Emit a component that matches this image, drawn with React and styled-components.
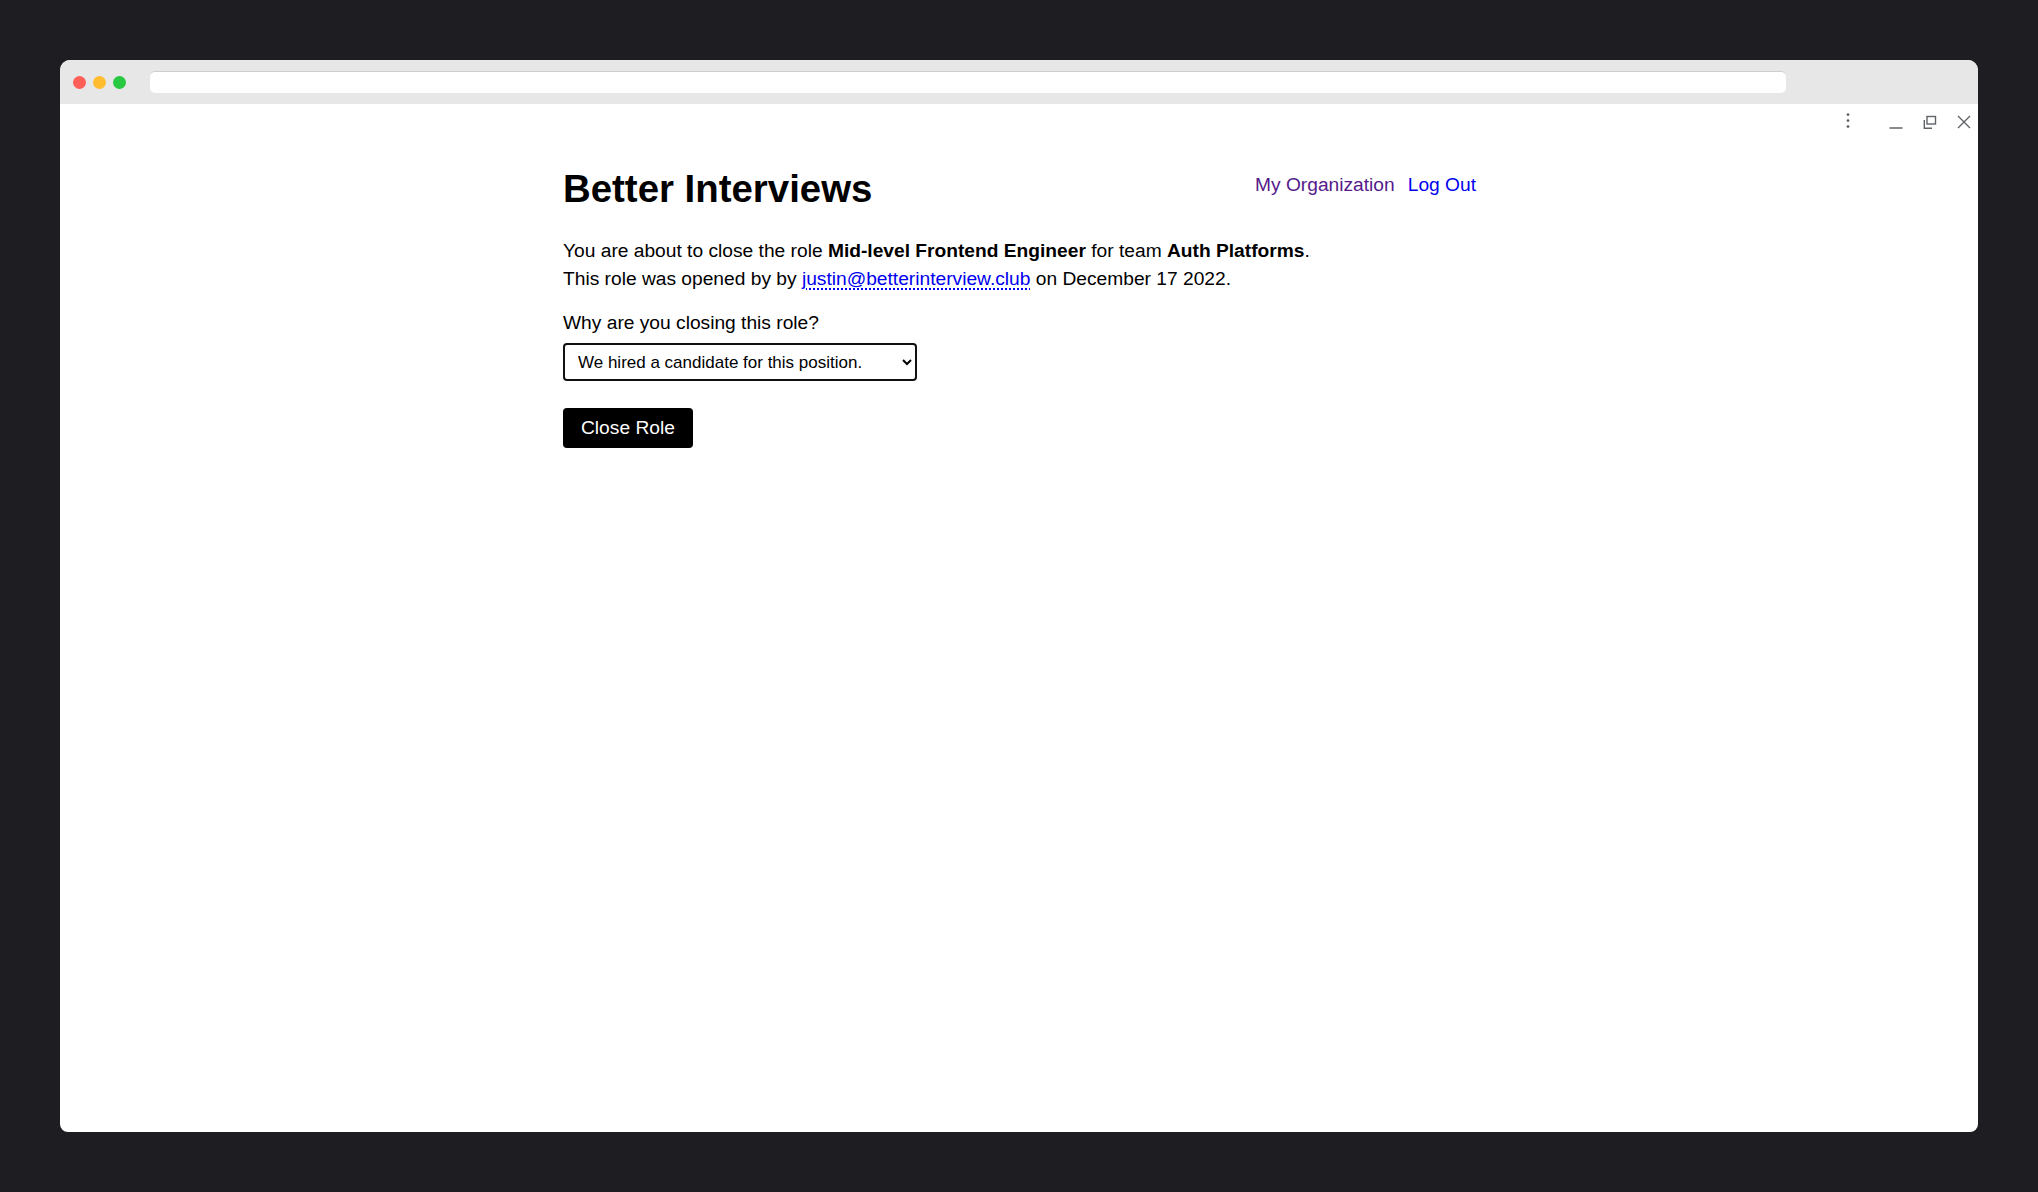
import React from "react";
import styled, { createGlobalStyle } from "styled-components";

const Global = createGlobalStyle`
  html, body {
    margin: 0;
    padding: 0;
    background: #1e1e22;
  }
  body {
    font-family: "Liberation Sans", Arial, sans-serif;
  }
`;

const Stage = styled.div`
  padding: 60px;
  height: 1192px;
  box-sizing: border-box;
`;

const Frame = styled.div`
  height: 1072px;
  background: #fff;
  border-radius: 10px 10px 8px 8px;
  overflow: hidden;
  display: flex;
  flex-direction: column;
`;

const TitleBar = styled.div`
  height: 44px;
  flex: none;
  background: #e7e7e7;
  display: flex;
  align-items: center;
  padding-left: 13px;
  box-sizing: border-box;
`;

const Lights = styled.div`
  display: flex;
  gap: 7px;
  margin-right: 24px;
`;

const Light = styled.span`
  width: 13px;
  height: 13px;
  border-radius: 50%;
  background: ${props => props.color};
`;

const UrlBar = styled.div`
  flex: 1;
  height: 22px;
  margin-right: 192px;
  background: #fff;
  border-radius: 5px;
  border-top: 1px solid #cfcfcf;
  box-sizing: border-box;
`;

const Controls = styled.div`
  height: 34px;
  flex: none;
  display: flex;
  justify-content: flex-end;
  align-items: flex-start;
  padding: 9px 6px 0 0;
  box-sizing: border-box;
`;

const Ctl = styled.svg`
  width: 16px;
  height: 16px;
  margin-left: ${props => props.gap}px;
  color: #5f6368;
`;

const Page = styled.main`
  width: 914px;
  margin: 0 auto;
  padding: 29px 0 0 1px;
  box-sizing: border-box;
  color: #000;
  font-size: 19.2px;
  line-height: 28px;
`;

const Header = styled.header`
  display: flex;
  justify-content: space-between;
  align-items: flex-start;
`;

const Title = styled.h1`
  margin: 0;
  font-size: 38.4px;
  line-height: 44px;
  font-weight: 700;
`;

const Nav = styled.nav`
  display: flex;
  gap: 13px;
  padding-top: 7px;
  line-height: 22px;
`;

const NavLink = styled.a`
  color: ${props => (props.visited ? "#551a8b" : "#0000ee")};
  text-decoration: none;
`;

const Intro = styled.p`
  margin: 26px 0 0;
`;

const Mail = styled.a`
  color: #0000ee;
  text-decoration: underline dotted #0000ee;
  text-decoration-thickness: 2px;
  text-underline-offset: 3px;
`;

const Label = styled.label`
  display: block;
  margin-top: 16px;
`;

const Select = styled.select`
  display: block;
  margin-top: 6px;
  width: 354px;
  height: 38px;
  border: 2px solid #111;
  border-radius: 4px;
  background: #fff;
  color: #000;
  padding: 0 4px 0 9px;
  font-family: "Liberation Sans", Arial, sans-serif;
  font-size: 17px;
`;

const Button = styled.button`
  display: block;
  margin-top: 27px;
  height: 40px;
  padding: 0 18px;
  border: 0;
  border-radius: 4px;
  background: #000;
  color: #fff;
  font-family: "Liberation Sans", Arial, sans-serif;
  font-size: 19.2px;
  line-height: 22px;
  cursor: pointer;
`;

export default function App() {
  return (
    <Stage>
      <Global />
      <Frame>
        <TitleBar>
          <Lights>
            <Light color="#ff5f57" />
            <Light color="#febc2e" />
            <Light color="#28c840" />
          </Lights>
          <UrlBar />
        </TitleBar>
        <Controls>
          <Ctl viewBox="0 0 16 16" gap={0}>
            <circle cx="8" cy="1.6" r="1.4" fill="currentColor" />
            <circle cx="8" cy="7.6" r="1.4" fill="currentColor" />
            <circle cx="8" cy="13.6" r="1.4" fill="currentColor" />
          </Ctl>
          <Ctl viewBox="0 0 16 16" gap={32}>
            <line x1="1.5" y1="15" x2="14.5" y2="15" stroke="currentColor" strokeWidth="1.5" />
          </Ctl>
          <Ctl viewBox="0 0 16 16" gap={18}>
            <rect x="5" y="3.5" width="8.5" height="7.5" fill="none" stroke="currentColor" strokeWidth="1.4" />
            <path d="M2.3 7 V15.2 H10" fill="none" stroke="currentColor" strokeWidth="1.4" />
          </Ctl>
          <Ctl viewBox="0 0 16 16" gap={18}>
            <path d="M2 3 L14 15 M14 3 L2 15" stroke="currentColor" strokeWidth="1.4" />
          </Ctl>
        </Controls>
        <Page>
          <Header>
            <Title>Better Interviews</Title>
            <Nav>
              <NavLink href="#" visited>My Organization</NavLink>
              <NavLink href="#">Log Out</NavLink>
            </Nav>
          </Header>
          <Intro>
            You are about to close the role <b>Mid-level Frontend Engineer</b> for team{" "}
            <b>Auth Platforms</b>.
            <br />
            This role was opened by by <Mail href="#">justin@betterinterview.club</Mail> on
            December 17 2022.
          </Intro>
          <Label htmlFor="reason">Why are you closing this role?</Label>
          <Select id="reason" defaultValue="hired">
            <option value="hired">We hired a candidate for this position.</option>
            <option value="cancelled">This position is no longer needed.</option>
          </Select>
          <Button>Close Role</Button>
        </Page>
      </Frame>
    </Stage>
  );
}
